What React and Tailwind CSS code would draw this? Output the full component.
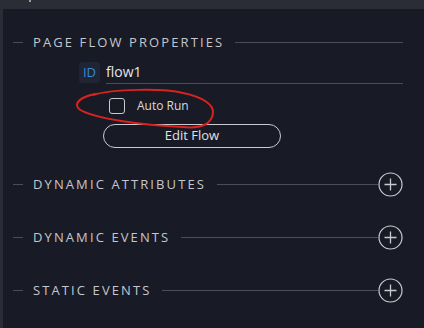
import React from 'react';

function PlusCircle() {
  return (
    <svg width="25" height="25" viewBox="0 0 25 25" fill="none" className="shrink-0">
      <circle cx="12.5" cy="12.5" r="11.5" stroke="#c9cad1" strokeWidth="1.2" />
      <path d="M12.5 6.5v12M6.5 12.5h12" stroke="#c9cad1" strokeWidth="1.3" />
    </svg>
  );
}

function SectionHeader({ title, action }) {
  return (
    <div className="flex items-center h-[25px]">
      <div className="w-[10px] h-px bg-[#4a4c57]" />
      <span className="ml-[10px] mr-[11px] text-[13px] tracking-[2.1px] text-[#c6c7ce] whitespace-nowrap">{title}</span>
      <div className="flex-1 h-px bg-[#4a4c57]" />
      {action && <PlusCircle />}
    </div>
  );
}

export default function App() {
  return (
    <div className="w-[424px] h-[328px] bg-[#181a25] overflow-hidden font-['Open_Sans',sans-serif] flex flex-col">
      {/* top strip */}
      <div className="h-[9px] bg-[#2a2c36] shrink-0 relative">
        <div className="absolute left-[29px] top-0 w-[2px] h-[2px] bg-[#9a9ba3]" />
      </div>
      <div className="flex flex-1">
        <div className="w-[3px] bg-[#2a2c36]" />
        <div className="flex-1 pl-[10px] pr-[21px] pt-[21px]">
          <SectionHeader title="PAGE FLOW PROPERTIES" />

          <div className="relative">
            <div className="ml-[66px] mt-[7px] flex items-end gap-[6px]">
              <div className="w-[21px] h-[21px] rounded-[3px] bg-[#1f2535] text-[#3b86d6] text-[13px] flex items-center justify-center">ID</div>
              <div className="flex-1 border-b border-[#4a4c57] pb-[2px] text-[14px] text-[#e4e5ea] leading-[18px] mb-[-1px]">flow1</div>
            </div>

            <div className="ml-[96px] mt-[14px] flex items-center gap-3">
              <div className="w-[16px] h-[16px] rounded-[3px] border border-[#c9cad1]" />
              <span className="text-[12px] text-[#d8d9de]">Auto Run</span>
            </div>

            <button className="ml-[90px] mt-[9px] w-[178px] h-[24px] rounded-full border border-[#c9cad1] text-[13px] text-[#e0e1e6] flex items-center justify-center">
              Edit Flow
            </button>

            <svg className="absolute left-[60px] top-[25px] pointer-events-none" width="150" height="50" viewBox="0 0 150 50" fill="none">
              <path
                d="M20 8 C 40 2, 90 1, 110 6 C 130 10, 141 18, 140 26 C 139 36, 130 42, 110 40 C 70 38, 20 32, 6 22 C 0 16, 8 10, 22 7"
                stroke="#d8231f"
                strokeWidth="2"
                strokeLinecap="round"
              />
            </svg>
          </div>

          <div className="mt-[24px] flex flex-col gap-[28px]">
            <SectionHeader title="DYNAMIC ATTRIBUTES" action />
            <SectionHeader title="DYNAMIC EVENTS" action />
            <SectionHeader title="STATIC EVENTS" action />
          </div>
        </div>
      </div>
    </div>
  );
}
